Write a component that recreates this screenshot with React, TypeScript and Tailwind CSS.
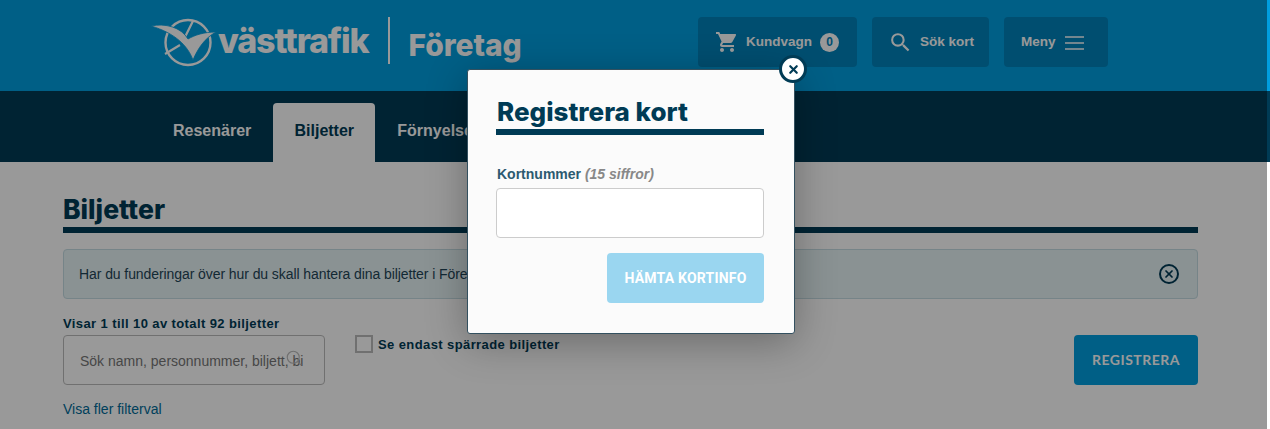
import { MdSearch, MdShoppingCart } from 'react-icons/md';
import { Search, X } from 'lucide-react';

const Logo = () => (
  <svg width="70" height="55" viewBox="0 0 70 55" className="shrink-0 text-white">
    <circle cx="38" cy="27.5" r="22.5" fill="none" stroke="currentColor" strokeWidth="2.4" />
    <path d="M43 6 L35 22 M15 39 L30 30" stroke="currentColor" strokeWidth="2.2" fill="none" />
    <path d="M1 11 C15 8 31 12 38 24 C45 20 54 17 66 17 C55 23 48 33 43 45 C38 31 25 18 1 11 Z" fill="currentColor" stroke="#009ee0" strokeWidth="0.8" />
  </svg>
);

const HeaderButton = ({ children, className }: { children: React.ReactNode; className: string }) => (
  <button className={`h-[50px] flex items-center rounded bg-[#0083bb] text-white text-[13.5px] font-bold ${className}`}>
    {children}
  </button>
);

export default function App() {
  return (
    <div className="relative h-screen overflow-hidden bg-white font-['Liberation_Sans',sans-serif] text-[14px] text-[#003b55]">
      <header className="h-[91px] bg-[#009ee0] flex">
        <div className="w-[698px] pl-[150px] pt-[15px] flex items-start">
          <Logo />
          <span className="-ml-0.5 mt-[2px] font-['Inter',sans-serif] font-extrabold text-[34px] leading-[48px] tracking-[-1.2px] text-white">västtrafik</span>
          <span className="ml-[20px] mt-[2px] w-0.5 h-[47px] bg-white" />
          <span className="ml-[18px] mt-[7px] font-['Inter',sans-serif] font-extrabold text-[30px] leading-[46px] tracking-[-0.05px] text-white">Företag</span>
        </div>
        <div className="pt-[17px] flex gap-[15px]">
          <HeaderButton className="w-[159px] pl-[17px]">
            <MdShoppingCart size={24} className="mr-[7px]" />
            <span className="pt-px">Kundvagn</span>
            <span className="ml-[8px] w-[19px] h-[19px] rounded-full bg-white text-[#0083bb] text-[12px] leading-[19px]">0</span>
          </HeaderButton>
          <HeaderButton className="w-[117px] pl-[16px]">
            <MdSearch size={25} className="mr-[7px]" />
            <span className="pt-px">Sök kort</span>
          </HeaderButton>
          <HeaderButton className="w-[104px] pl-[17px]">
            <span className="pt-px">Meny</span>
            <svg width="20" height="14" viewBox="0 0 20 14" className="ml-[8px] mt-0.5" stroke="currentColor" strokeWidth="1.6">
              <path d="M1 1H20M1 7H20M1 13H20" />
            </svg>
          </HeaderButton>
        </div>
      </header>

      <nav className="h-[71px] bg-[#003b55] pl-[155px] flex items-end text-[16px] font-bold text-white">
        <a className="pl-[18px] pr-[22px] h-[59px] leading-[56px]">Resenärer</a>
        <a className="w-[102px] text-center h-[59px] leading-[56px] bg-white text-[#003b55] rounded-t">Biljetter</a>
        <a className="px-[22px] h-[59px] leading-[56px]">Förnyelse</a>
      </nav>

      <main className="px-[63px] w-[1261px]">
        <h1 className="pt-[30px] font-['Inter',sans-serif] font-extrabold text-[26.5px] leading-[35px]">Biljetter</h1>
        <div className="h-1.5 bg-[#003b55]" />
        <div className="mt-4 h-[50px] rounded border border-[#c5dde3] bg-[#e6f3f6] pl-[15px] pr-[18px] flex items-center justify-between tracking-[-0.08px]">
          <p className="text-[#1f4557]">Har du funderingar över hur du skall hantera dina biljetter i Företag?</p>
          <span className="w-5 h-5 rounded-full border-2 border-[#003b55] flex items-center justify-center">
            <X size={12} strokeWidth={3.5} />
          </span>
        </div>
        <div className="mt-[16px] flex items-start">
          <div className="w-[292px]">
            <p className="font-bold text-[13px] leading-[17px] tracking-[0.4px]">Visar 1 till 10 av totalt 92 biljetter</p>
            <div className="relative mt-[3px] w-[262px] h-[50px] rounded border border-[#bbb] pl-4 pr-[21px] flex items-center overflow-hidden">
              <span className="whitespace-nowrap overflow-hidden text-[#777] mt-0.5">Sök namn, personnummer, biljett, bi</span>
              <Search size={18} strokeWidth={1.5} className="absolute left-[221px] top-[13px] text-[#bbb]" />
            </div>
            <a className="block mt-[15px] text-[#006b99] text-[14px] leading-[18px]">Visa fler filterval</a>
          </div>
          <label className="mt-[20px] flex items-start">
            <span className="w-[18px] h-[18px] border-2 border-[#bbb] bg-white" />
            <span className="ml-[5px] pt-px font-bold text-[13px] leading-[17px] tracking-[0.4px]">Se endast spärrade biljetter</span>
          </label>
          <button className="ml-auto mt-[20px] w-[124px] h-[50px] pb-0.5 rounded bg-[#009ee0] text-white font-['Lato',sans-serif] font-bold text-[14px] tracking-[0.5px]">REGISTRERA</button>
        </div>
      </main>

      <div className="absolute inset-y-0 left-0 right-[3px] bg-black/40" />

      <div className="absolute left-[467px] top-[69px] w-[328px] h-[265px] rounded-[3px] border border-[#33505f] bg-[#fbfbfb] pl-[28px] pr-[30px] pt-[24px] shadow-[0_8px_40px_rgba(0,0,0,0.3)]">
        <h2 className="pl-px font-['Inter',sans-serif] font-extrabold text-[26px] leading-[35px] text-[#003b55] whitespace-nowrap">Registrera kort</h2>
        <div className="h-1.5 bg-[#003b55]" />
        <p className="mt-[30px] pl-px text-[14px] leading-[18px] font-bold text-[#2b5a70]">
          Kortnummer <i className="text-[#888]">(15 siffror)</i>
        </p>
        <input className="mt-[5px] block w-full h-[50px] rounded border border-[#ccc] bg-white" />
        <div className="mt-[15px] flex justify-end">
          <button className="w-[157px] h-[50px] rounded bg-[#9ad6f0] text-white font-['Roboto',sans-serif] font-bold text-[14px] tracking-[0.2px]">HÄMTA KORTINFO</button>
        </div>
        <button className="absolute -right-[13px] -top-[15px] w-[28px] h-[28px] rounded-full border-[3px] border-[#003b55] bg-white flex items-center justify-center text-[#003b55]">
          <X size={13} strokeWidth={4} />
        </button>
      </div>
    </div>
  );
}
